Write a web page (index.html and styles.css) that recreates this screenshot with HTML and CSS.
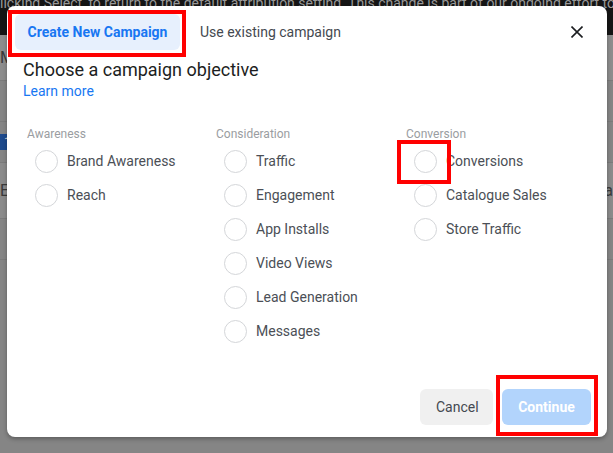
FILE: index.html
```html
<!DOCTYPE html>
<html>
<head>
    <title>Create New Campaign</title>
    <link rel="stylesheet" href="styles.css">
</head>
<body>
    <!-- page behind the dialog -->
    <div class="notice-bar">licking Select, to return to the default attribution setting. This change is part of our ongoing effort to</div>
    <div class="page">
        <div class="page-row light"><span class="page-text">M</span></div>
        <div class="page-row"></div>
        <div class="page-row"><span class="page-badge">1</span></div>
        <div class="page-row mid"><span class="page-text">Ed</span><span class="page-text right">a</span></div>
        <div class="page-row"></div>
    </div>

    <div class="modal">
        <div class="modal-header">
            <button class="tab active">Create New Campaign</button>
            <button class="tab">Use existing campaign</button>
            <button class="close" aria-label="Close">
                <svg width="12" height="12" viewBox="0 0 12 12">
                    <path d="M0.5 0.5 L11.5 11.5 M11.5 0.5 L0.5 11.5" stroke="#1c1e21" stroke-width="1.6" fill="none"/>
                </svg>
            </button>
        </div>
        <div class="modal-body">
            <h1 class="title">Choose a campaign objective</h1>
            <a class="learn-more" href="#">Learn more</a>
            <div class="objectives">
                <div class="column">
                    <div class="column-title">Awareness</div>
                    <label class="option"><span class="radio"></span>Brand Awareness</label>
                    <label class="option"><span class="radio"></span>Reach</label>
                </div>
                <div class="column">
                    <div class="column-title">Consideration</div>
                    <label class="option"><span class="radio"></span>Traffic</label>
                    <label class="option"><span class="radio"></span>Engagement</label>
                    <label class="option"><span class="radio"></span>App Installs</label>
                    <label class="option"><span class="radio"></span>Video Views</label>
                    <label class="option"><span class="radio"></span>Lead Generation</label>
                    <label class="option"><span class="radio"></span>Messages</label>
                </div>
                <div class="column">
                    <div class="column-title">Conversion</div>
                    <label class="option"><span class="radio"></span>Conversions</label>
                    <label class="option"><span class="radio"></span>Catalogue Sales</label>
                    <label class="option"><span class="radio"></span>Store Traffic</label>
                </div>
            </div>
        </div>
        <div class="modal-footer">
            <button class="btn cancel">Cancel</button>
            <button class="btn continue">Continue</button>
        </div>
    </div>

    <!-- red annotation boxes -->
    <div class="mark mark-tab"></div>
    <div class="mark mark-radio"></div>
    <div class="mark mark-continue"></div>
</body>
</html>
```

FILE: styles.css
```css
body {
    margin: 0;
    width: 613px;
    height: 453px;
    overflow: hidden;
    background-color: #858585;
    font-family: Roboto, "Liberation Sans", Arial, sans-serif;
    position: relative;
}

.notice-bar {
    height: 40px;
    background-color: #151515;
    color: #9a9a9a;
    font-size: 14px;
    line-height: 14px;
    margin-top: -5px;
    padding-top: 1px;
    box-sizing: border-box;
    white-space: nowrap;
    overflow: hidden;
}

.page-row {
    height: 40px;
    border-bottom: 1px solid #7b7b7b;
    display: flex;
    align-items: center;
    justify-content: space-between;
}

.page-row.light {
    background-color: #8d8d8d;
    height: 45px;
}

.page-row.mid {
    background-color: #8b8b8b;
    height: 55px;
}

.page-text {
    color: #3a3a3a;
    font-size: 16px;
}

.page-badge {
    background-color: #1e4a8c;
    color: #d0d0d0;
    font-size: 13px;
    padding: 0 4px;
    line-height: 16px;
}

/* dialog */
.modal {
    position: absolute;
    left: 7px;
    top: 6px;
    width: 600px;
    height: 431px;
    background-color: #fff;
    border-radius: 8px;
    box-shadow: 0 2px 4px rgba(0, 0, 0, 0.3);
    display: flex;
    flex-direction: column;
    box-sizing: border-box;
    padding: 8px 16px 12px 8px;
}

.modal-header {
    display: flex;
    align-items: center;
    gap: 8px;
    height: 36px;
}

.tab {
    height: 36px;
    border: none;
    border-radius: 6px;
    background: none;
    font-family: inherit;
    font-size: 14px;
    color: #444950;
    padding: 0 12px;
    cursor: pointer;
}

.tab.active {
    background-color: #e7f0fd;
    color: #1877f2;
    font-weight: bold;
    width: 165px;
}

.close {
    margin-left: auto;
    margin-right: 7px;
    border: none;
    background: none;
    padding: 0;
    width: 14px;
    height: 14px;
    display: flex;
    align-items: center;
    justify-content: center;
}

.modal-body {
    padding-left: 8px;
}

.title {
    margin: 10px 0 0;
    font-size: 18px;
    font-weight: normal;
    line-height: 20px;
    color: #1c1e21;
}

.learn-more {
    display: block;
    margin-top: 2px;
    font-size: 14px;
    line-height: 18px;
    color: #1877f2;
    text-decoration: none;
}

.objectives {
    display: grid;
    grid-template-columns: 189px 190px 190px;
    margin-top: 26px;
    padding-left: 4px;
}

.column-title {
    font-size: 12px;
    line-height: 16px;
    color: #9a9da1;
    margin-bottom: 2px;
}

.option {
    display: flex;
    align-items: center;
    height: 34px;
    font-size: 14px;
    color: #4b4f56;
    padding-left: 8px;
}

.radio {
    width: 21px;
    height: 21px;
    border: 1px solid #d4d6d9;
    border-radius: 50%;
    margin-right: 9px;
}

.modal-footer {
    margin-top: auto;
    display: flex;
    justify-content: flex-end;
    gap: 9px;
}

.btn {
    height: 36px;
    border: none;
    border-radius: 6px;
    font-family: inherit;
    font-size: 14px;
    padding: 0 16px;
}

.cancel {
    width: 73px;
    background-color: #f0f0f0;
    color: #444950;
}

.continue {
    width: 89px;
    background-color: #b2d4fc;
    color: #fff;
    font-weight: bold;
}

/* annotations */
.mark {
    position: absolute;
    border: 4px solid #ff0000;
    box-sizing: border-box;
}

.mark-tab {
    left: 8px;
    top: 10px;
    width: 178px;
    height: 47px;
}

.mark-radio {
    left: 397px;
    top: 140px;
    width: 54px;
    height: 44px;
}

.mark-continue {
    left: 496px;
    top: 375px;
    width: 102px;
    height: 61px;
}
```
